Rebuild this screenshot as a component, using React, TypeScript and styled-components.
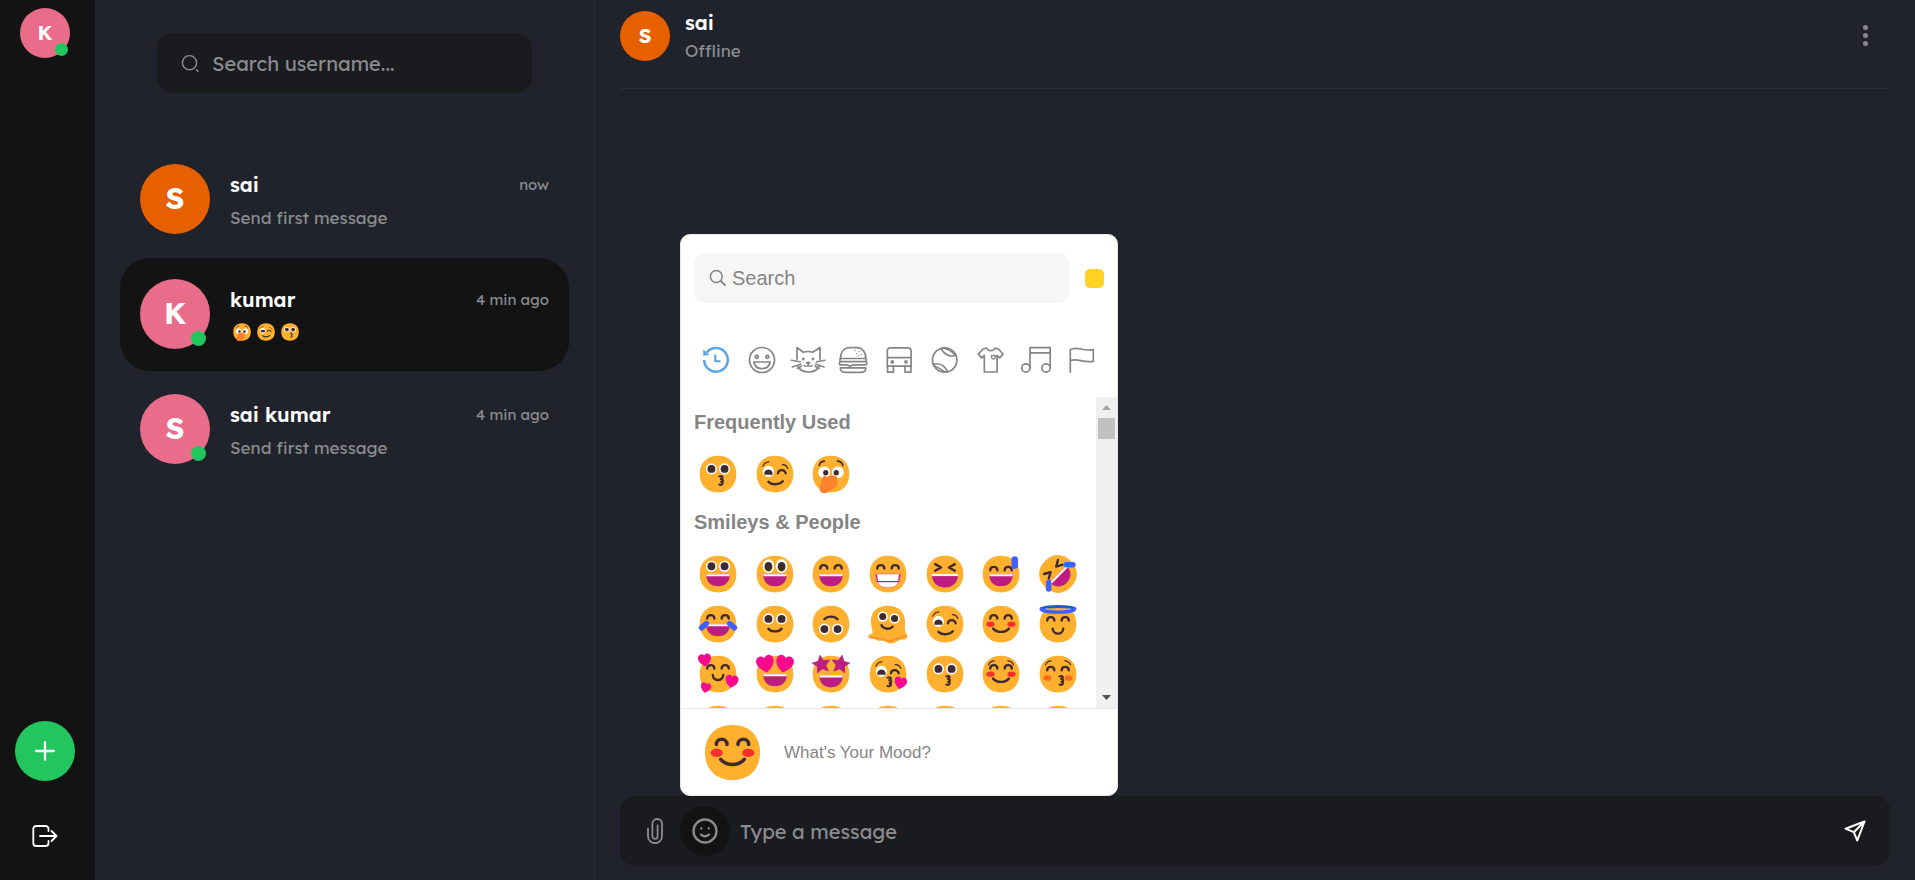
import React, { ReactNode } from 'react';
import styled, { createGlobalStyle } from 'styled-components';

const INK = '#402A32';
const MOUTH = '#BB1D80';
const BLUE = '#3F5FFF';
const PINK = '#F70A8D';

const GlobalStyle = createGlobalStyle`
  *, *::before, *::after { box-sizing: border-box; }
  body {
    margin: 0;
    background: #20232b;
    color: #fff;
    font-family: Lexend, Inter, "Liberation Sans", sans-serif;
  }
  button, input { font: inherit; color: inherit; }
  button { border: 0; padding: 0; background: none; cursor: pointer; }
  h2, h3, p { margin: 0; }
`;

/* ---------- Emoji drawings ---------- */

const FacePath = () => (
  <path
    fill="#FFB02E"
    d="M16 30C25.3 30 30 23.7 30 16S25.3 2 16 2 2 8.3 2 16s4.7 14 14 14Z"
  />
);

const OpenEyes = ({ y = 12.1 }: { y?: number }) => (
  <>
    <circle cx="11" cy={y} r="4.2" fill="#fff" />
    <circle cx="21" cy={y} r="4.2" fill="#fff" />
    <circle cx="11" cy={y} r="3" fill={INK} />
    <circle cx="21" cy={y} r="3" fill={INK} />
  </>
);

const TallEyes = () => (
  <>
    <ellipse cx="11" cy="10" rx="4.4" ry="5.2" fill="#fff" />
    <ellipse cx="21" cy="10" rx="4.4" ry="5.2" fill="#fff" />
    <ellipse cx="11" cy="10.4" rx="3" ry="3.6" fill={INK} />
    <ellipse cx="21" cy="10.4" rx="3" ry="3.6" fill={INK} />
  </>
);

const Line = ({ d, w = 1.8, c = INK }: { d: string; w?: number; c?: string }) => (
  <path d={d} fill="none" stroke={c} strokeWidth={w} strokeLinecap="round" strokeLinejoin="round" />
);

const HappyEyes = () => (
  <Line d="M7.8 11.9c0-3.5 5.4-3.5 5.4 0M18.8 11.9c0-3.5 5.4-3.5 5.4 0" />
);

const SquintEyes = () => <Line d="M8.5 8.5l4.5 2.5-4.5 2.5M23.5 8.5L19 11l4.5 2.5" />;

const WinkEyes = () => (
  <>
    <circle cx="11" cy="14" r="4.3" fill="#fff" />
    <path d="M7.9 16.5a3.2 3.2 0 1 1 6.2 0z" fill={INK} />
    <Line d="M18.2 15.5c.6-3.2 5-3.2 6 0" w={1.7} />
    <Line d="M6.8 10c1-2.3 2.5-3.2 4.5-3.3M21.5 8.8c2-.1 3.5 1 4.3 3" w={0.9} />
  </>
);

const Brows = () => (
  <Line d="M6.5 9c.8-2 2.3-2.9 4.3-3M25.5 9c-.8-2-2.3-2.9-4.3-3" w={0.9} />
);

const Laugh = ({ big = false }: { big?: boolean }) => (
  <>
    <path
      d={big ? 'M6 16h20c0 6-3.5 10.2-10 10.2S6 22 6 16Z' : 'M7 16.2h18c0 5.5-3.3 9.2-9 9.2s-9-3.7-9-9.2Z'}
      fill={MOUTH}
    />
    <path d={big ? 'M6 16h20v1.6H6z' : 'M7 16.2h18l-.3 1.6H7.3z'} fill="#fff" />
  </>
);

const Kiss = ({ x = 18.3, y = 17 }: { x?: number; y?: number }) => (
  <path
    transform={`translate(${x} ${y})`}
    d="M-1.3 .8c1.6-.7 2.7 0 2.5.9s-1.2 1-1.9 1c1.5.1 2.3.5 2.2 1.3s-1.2 1-1.9 1c1.3.2 1.9.6 1.7 1.3-.2 1-1.5 1.2-2.6.8"
    fill="none"
    stroke={INK}
    strokeWidth="1.6"
    strokeLinecap="round"
  />
);

const Heart = ({ x, y, s, r = 0 }: { x: number; y: number; s: number; r?: number }) => (
  <path
    transform={`translate(${x} ${y}) rotate(${r}) scale(${s})`}
    d="M0 5C-2.8 3.2-5 1-5-1.6-5-3.4-3.8-4.6-2.3-4.6-1.2-4.6-.4-4 0-3.2.4-4 1.2-4.6 2.3-4.6 3.8-4.6 5-3.4 5-1.6 5 1 2.8 3.2 0 5Z"
    fill={PINK}
  />
);

const Star = ({ x, y, r }: { x: number; y: number; r: number }) => (
  <path
    transform={`translate(${x} ${y}) rotate(${r})`}
    d="M0-6.8L2-2.5 6.7-2 3.2 1.3 4.2 6 0 3.6-4.2 6-3.2 1.3-6.7-2-2-2.5Z"
    fill={MOUTH}
    stroke={MOUTH}
    strokeWidth=".6"
    strokeLinejoin="round"
  />
);

const Cheeks = ({ color = '#F92F2F', y = 16.2 }: { color?: string; y?: number }) => (
  <>
    <ellipse cx="8" cy={y} rx="3.1" ry="2.1" fill={color} />
    <ellipse cx="24" cy={y} rx="3.1" ry="2.1" fill={color} />
  </>
);

const WideSmile = () => <Line d="M10 19.5c3 3.4 9 3.4 12 0" />;
const SmallSmile = () => <Line d="M12 19.3c.3 5 7.7 5 8 0" />;
const SoftSmile = () => <Line d="M11 19.7c2.5 2.6 7.5 2.6 10 0" />;

const faces: Record<string, ReactNode> = {
  kissing: <><FacePath /><OpenEyes /><Kiss /></>,
  winking: <><FacePath /><WinkEyes /><Line d="M11 22c2.5 2.5 8 2.5 11-.5" /></>,
  gasping: (
    <>
      <FacePath />
      <circle cx="10.8" cy="14.7" r="4.5" fill="#fff" />
      <circle cx="21.2" cy="14.7" r="4.5" fill="#fff" />
      <circle cx="12" cy="15" r="2" fill={INK} />
      <circle cx="20" cy="15" r="2" fill={INK} />
      <Line d="M7 9.5c.5-2 2-3.3 4-3.3M25 9.5c-.5-2-2-3.3-4-3.3" w={1.2} />
      <path
        d="M9 19.5l1.6-2c.6-.6 1.5-.3 1.7.6l6-1c1.5-.2 2.2.8 2.2 1.8l.5 4c0 2.5-1.8 4-4 4.5l-4.500 3H9.500c-1.700-.5-2.300-2-2.300-3.500Z"
        fill="#FF822D"
      />
    </>
  ),
  grinning: <><FacePath /><OpenEyes y={10.1} /><Laugh /></>,
  smiley: <><FacePath /><TallEyes /><Laugh /></>,
  smile: <><FacePath /><HappyEyes /><Laugh /></>,
  beaming: (
    <>
      <FacePath />
      <HappyEyes />
      <path d="M6.5 16h19c0 7-3.2 10.4-9.5 10.4S6.5 23 6.5 16Z" fill="#fff" stroke={MOUTH} strokeWidth=".3" />
      <path d="M7 21.3h18l-.4 1h-17zM6.5 16l1.2.5.7 5.5-1.1-1.2ZM25.5 16l-1.2.5-.7 5.5 1.1-1.2Z" fill={MOUTH} />
    </>
  ),
  laughing: <><FacePath /><SquintEyes /><Laugh big /></>,
  sweat: (
    <>
      <FacePath />
      <g transform="translate(0 1.3)"><HappyEyes /></g>
      <Laugh />
      <rect x="24" y="2.5" width="5" height="9.7" rx="2.5" fill={BLUE} />
    </>
  ),
  rofl: (
    <>
      <g transform="rotate(-45 16 16)">
        <FacePath />
        <SquintEyes />
        <Laugh />
      </g>
      <rect x="20.3" y="6.8" width="9.2" height="4.2" rx="2.1" fill={BLUE} />
      <rect x="6.8" y="20.3" width="4.2" height="9.2" rx="2.1" fill={BLUE} />
    </>
  ),
  joy: (
    <>
      <FacePath />
      <HappyEyes />
      <Laugh />
      <rect x="0.8" y="15.2" width="9" height="4.2" rx="2" transform="rotate(-42 5.3 17.3)" fill={BLUE} />
      <rect x="22.2" y="15.2" width="9" height="4.2" rx="2" transform="rotate(42 26.7 17.3)" fill={BLUE} />
    </>
  ),
  slight: <><FacePath /><OpenEyes /><SoftSmile /></>,
  upside: (
    <g transform="rotate(180 16 16)">
      <FacePath />
      <OpenEyes />
      <SoftSmile />
    </g>
  ),
  melting: (
    <>
      <path
        d="M3 13.5C3 6.5 8 2 16 2s13 5 13 12c0 3-.6 6 .5 8.3.8 1.5 1.3 2 1.3 3.2 0 2.3-3 2.3-5.3 2.5-1.5.1-2.5 1.5-5 2.5-2.3.7-4.5.3-6-.9-2-1.3-3.5-.8-5.5-.8-3-.1-2.5-1.6-5-1.7-1.8 0-3-.6-2.9-2 .2-1.6 2-1.5 3.1-1.9C4.5 21.5 3 17.5 3 13.5Z"
        fill="#FFB02E"
      />
      <Line d="M1.8 26c3 1 3.5.2 5.5.8 2 .7 3.7.1 5.5 1 2.7 1.7 5.4 1.5 8 0 2.2-1.5 6.5-1 9-2.6" w={0.9} c="#FF822D" />
      <circle cx="12" cy="10.3" r="3.9" fill="#fff" />
      <circle cx="21" cy="11.8" r="3.9" fill="#fff" />
      <circle cx="12" cy="10.3" r="2.7" fill={INK} />
      <circle cx="21" cy="11.8" r="2.7" fill={INK} />
      <Line d="M11 17c1.5 3 6.5 3.6 8.5 1" />
    </>
  ),
  blush: <><FacePath /><HappyEyes /><Cheeks /><WideSmile /></>,
  halo: (
    <>
      <FacePath />
      <path d="M3.5 4.5C5 2 27 2 28.5 4.5" fill="none" stroke="#1B5ECB" strokeWidth="2.2" />
      <path d="M3.2 4.3C3.2 7.8 28.8 7.8 28.8 4.3" fill="none" stroke={BLUE} strokeWidth="2.6" strokeLinecap="round" />
      <g transform="translate(0 1.5)"><HappyEyes /></g>
      <g transform="translate(0 .3)"><SmallSmile /></g>
    </>
  ),
  hearts: (
    <>
      <FacePath />
      <HappyEyes />
      <g transform="translate(0 -2.5)"><SmallSmile /></g>
      <Heart x={5.9} y={5.3} s={1} r={-8} />
      <Heart x={26.5} y={21.5} s={1} r={8} />
      <Heart x={6.7} y={26.4} s={0.8} r={12} />
    </>
  ),
  heartEyes: (
    <>
      <FacePath />
      <Laugh />
      <Heart x={8.7} y={8.2} s={1.35} r={-12} />
      <Heart x={23.3} y={8.2} s={1.35} r={12} />
    </>
  ),
  starEyes: <><FacePath /><g transform="translate(0 .8)"><Laugh /></g><Star x={8.7} y={8.5} r={-10} /><Star x={23.3} y={8.5} r={10} /></>,
  kissHeart: <><FacePath /><WinkEyes /><Kiss x={17} y={18} /><Heart x={25.5} y={22.7} s={0.95} r={12} /></>,
  relaxed: <><FacePath /><Brows /><HappyEyes /><Cheeks /><WideSmile /></>,
  kissClosed: <><FacePath /><Brows /><g transform="translate(0 1.3)"><HappyEyes /></g><Cheeks color="#FF6723" y={19} /><Kiss x={18.5} y={17} /></>,
  plain: <FacePath />,
};

const EmojiSvg = styled.svg<{ $size: number }>`
  width: ${(p) => p.$size}px;
  height: ${(p) => p.$size}px;
  flex: none;
  display: block;
`;

const Emoji = ({ name, size }: { name: string; size: number }) => (
  <EmojiSvg $size={size} viewBox="0 0 32 32" aria-hidden="true">
    {faces[name]}
  </EmojiSvg>
);

/* ---------- Shell ---------- */

const Shell = styled.div`
  display: flex;
  min-height: 100vh;
`;

const Rail = styled.nav`
  width: 95px;
  flex: none;
  padding: 8px 5px 19px 0;
  background: #131313;
  display: flex;
  flex-direction: column;
  align-items: center;
  justify-content: space-between;
`;

const RailActions = styled.div`
  display: flex;
  flex-direction: column;
  align-items: center;
  gap: 30px;
`;

const RoundButton = styled.button<{ $size: number; $bg?: string }>`
  width: ${(p) => p.$size}px;
  height: ${(p) => p.$size}px;
  border-radius: 50%;
  background: ${(p) => p.$bg || 'transparent'};
  display: flex;
  align-items: center;
  justify-content: center;
  flex: none;
`;

const AvatarBox = styled.div<{ $large?: boolean; $color: string }>`
  position: relative;
  flex: none;
  width: ${(p) => (p.$large ? 70 : 50)}px;
  height: ${(p) => (p.$large ? 70 : 50)}px;
  padding-bottom: 2px;
  border-radius: 50%;
  background: ${(p) => p.$color};
  display: flex;
  align-items: center;
  justify-content: center;
  font-size: ${(p) => (p.$large ? 30 : 20)}px;
  font-weight: 700;
`;

const OnlineDot = styled.span<{ $large?: boolean }>`
  position: absolute;
  right: ${(p) => (p.$large ? 4 : 2)}px;
  bottom: ${(p) => (p.$large ? 3 : 2)}px;
  width: ${(p) => (p.$large ? 15 : 13)}px;
  height: ${(p) => (p.$large ? 15 : 13)}px;
  border-radius: 50%;
  background: #22c55e;
`;

type AvatarProps = { letter: string; color: string; large?: boolean; online?: boolean };
const Avatar = ({ letter, color, large, online }: AvatarProps) => (
  <AvatarBox $large={large} $color={color}>
    {letter}
    {online && <OnlineDot $large={large} />}
  </AvatarBox>
);

/* ---------- Contacts ---------- */

const Contacts = styled.aside`
  width: 500px;
  flex: none;
  padding: 33px 25px;
  border-right: 1px solid #2a2d35;
  display: flex;
  flex-direction: column;
  gap: 50px;
`;

const UserSearch = styled.label`
  width: 375px;
  height: 60px;
  align-self: center;
  padding: 0 24px;
  border-radius: 15px;
  background: #1a1b1e;
  color: #8b8c90;
  display: flex;
  align-items: center;
  gap: 12px;
`;

const BareInput = styled.input`
  flex: 1;
  min-width: 0;
  border: 0;
  outline: 0;
  padding: 0;
  background: transparent;
  font-size: 20px;
  &::placeholder { color: inherit; opacity: 1; }
`;

const ContactList = styled.ul`
  list-style: none;
  margin: 0;
  padding: 0;
  display: flex;
  flex-direction: column;
  gap: 2px;
`;

const ContactRow = styled.button<{ $active?: boolean }>`
  width: 100%;
  height: 113px;
  padding: 0 20px 1px;
  border-radius: 30px;
  background: ${(p) => (p.$active ? '#131313' : 'transparent')};
  display: flex;
  align-items: center;
  gap: 20px;
  text-align: left;
`;

const ContactText = styled.div`
  flex: 1;
  min-width: 0;
  height: 72px;
  padding-top: 9px;
`;

const ContactTop = styled.div`
  display: flex;
  justify-content: space-between;
  align-items: center;
  line-height: 26px;
`;

const Name = styled.span`
  font-size: 20px;
  font-weight: 600;
`;

const Time = styled.span`
  font-size: 15px;
  color: #8b8c90;
`;

const Preview = styled.div`
  margin-top: 6px;
  height: 28px;
  font-size: 17px;
  line-height: 28px;
  color: #8b8c90;
`;

const EmojiRun = styled.div`
  display: flex;
  gap: 4px;
  padding: 3px 2px;
`;

const contacts = [
  { name: 'sai', letter: 'S', color: '#e66000', time: 'now', online: false, active: false },
  { name: 'kumar', letter: 'K', color: '#e96d8b', time: '4 min ago', online: true, active: true, emojis: ['gasping', 'winking', 'kissing'] },
  { name: 'sai kumar', letter: 'S', color: '#e96d8b', time: '4 min ago', online: true, active: false },
];

/* ---------- Chat ---------- */

const Chat = styled.main`
  flex: 1;
  min-width: 0;
  padding: 0 25px 14px;
  display: flex;
  flex-direction: column;
`;

const ChatHeader = styled.header`
  height: 89px;
  padding: 11px 13px 0 0;
  border-bottom: 1px solid #2a2d35;
  display: flex;
  align-items: flex-start;
  gap: 15px;
`;

const Peer = styled.div`
  flex: 1;
  h2 { font-size: 20px; font-weight: 600; line-height: 24px; }
  p { margin-top: 3px; font-size: 17px; line-height: 26px; color: #8b8c90; }
`;

const MenuButton = styled.button`
  width: 24px;
  height: 48px;
  display: flex;
  align-items: center;
  justify-content: center;
`;

const Messages = styled.section`
  flex: 1;
`;

const Composer = styled.form`
  position: relative;
  height: 70px;
  padding: 0 10px;
  border-radius: 15px;
  background: #1a1b1e;
  color: #8b8c90;
  display: flex;
  align-items: center;
`;

const MessageInput = styled(BareInput)`
  margin-left: 10px;
`;

/* ---------- Picker ---------- */

const Picker = styled.div`
  position: absolute;
  left: 60px;
  bottom: 100%;
  width: 438px;
  border: 1px solid #e7e7e7;
  border-radius: 10px;
  background: #fff;
  color: #858585;
  font-family: "Liberation Sans", Arial, sans-serif;
  overflow: hidden;
`;

const PickerHeader = styled.div`
  display: flex;
  align-items: center;
  justify-content: space-between;
  padding: 18px 13px 0;
`;

const EmojiSearch = styled.label`
  width: 375px;
  height: 50px;
  padding: 0 15px;
  border-radius: 10px;
  background: #f6f6f6;
  display: flex;
  align-items: center;
  gap: 5px;
`;

const SkinTone = styled.button`
  width: 19px;
  height: 19px;
  border-radius: 5px;
  background: #ffd225;
`;

const Categories = styled.div`
  display: flex;
  justify-content: space-between;
  padding: 43px 17px 23px;
`;

const CategoryButton = styled.button<{ $active?: boolean }>`
  width: 36px;
  height: 28px;
  color: ${(p) => (p.$active ? '#5aa5e2' : '#858585')};
  svg { display: block; }
`;

const PickerBody = styled.div`
  height: 311px;
  display: flex;
  overflow: hidden;
`;

const EmojiScroll = styled.div`
  flex: 1;
  padding: 2px 10px 0 9px;
`;

const GroupLabel = styled.h3`
  height: 50px;
  padding: 0 4px 4px;
  font-size: 20px;
  line-height: 46px;
  font-weight: 700;
`;

const EmojiGrid = styled.div`
  display: grid;
  grid-template-columns: repeat(7, 1fr);
  grid-auto-rows: 50px;
`;

const EmojiButton = styled.button`
  display: flex;
  align-items: center;
  justify-content: center;
`;

const ScrollTrack = styled.div`
  width: 21px;
  background: #f0f0f0;
  display: flex;
  flex-direction: column;
  align-items: center;
`;

const ScrollArrow = styled.div`
  height: 21px;
  display: flex;
  align-items: center;
`;

const ScrollThumb = styled.div`
  width: 17px;
  height: 21px;
  margin-bottom: auto;
  background: #c1c1c1;
`;

const PickerFooter = styled.div`
  height: 87px;
  padding: 1px 20px 0;
  border-top: 1px solid #e7e7e7;
  display: flex;
  align-items: center;
  gap: 20px;
  font-size: 17px;
`;

const cat = (children: ReactNode) => (
  <svg width="36" height="28" viewBox="0 0 36 28" fill="none" stroke="currentColor" strokeWidth="1.7" strokeLinejoin="round" strokeLinecap="round" aria-hidden="true">
    {children}
  </svg>
);

const categories: { label: string; icon: ReactNode }[] = [
  {
    label: 'Frequently Used',
    icon: cat(
      <>
        <path d="M8.8 6.5A11.8 11.8 0 1 1 6.2 14" strokeWidth="2.5" strokeLinecap="butt" />
        <path d="M5.2 3.5v6.3l6.2-.7z" fill="currentColor" stroke="none" />
        <path d="M17.3 8.5v6.8h5.2" strokeWidth="2.1" strokeLinecap="butt" />
      </>,
    ),
  },
  {
    label: 'Smileys & People',
    icon: cat(
      <>
        <circle cx="18" cy="14" r="12.5" />
        <circle cx="12.7" cy="10.8" r="1.5" />
        <circle cx="23.3" cy="10.8" r="1.5" />
        <path d="M9.8 16h16.4c-.8 4.2-3.8 6.6-8.2 6.6S10.6 20.2 9.8 16Z" />
      </>,
    ),
  },
  {
    label: 'Animals & Nature',
    icon: cat(
      <>
        <path d="M7 13.5V1.5l6.3 4.8c3-1 6.400-1 9.400 0L30 1.5v12M8 20.5c2 3.7 5.6 5.5 10.5 5.5S27 24.2 29 20.5" />
        <path d="M1.3 14.3l8.7 1.5M2.3 21l8.5-3M35 14.3l-8.5 1.5M34 21l-8.3-3M7.5 22.500l4-2.500M29 22.500l-4-2.500" strokeWidth="1.500" />
        <path d="M16.5 16.5h3.4l-1.7 1.9zM18.2 18.4c0 2.5-3.5 2.5-4 .8M18.2 18.4c0 2.5 3.5 2.5 4 .8" strokeWidth="1.3" />
        <circle cx="13.3" cy="13" r=".6" />
        <circle cx="23" cy="13" r=".6" />
      </>,
    ),
  },
  {
    label: 'Food & Drink',
    icon: cat(
      <>
        <path d="M5.5 12.5C5.5 5.5 9.5 1.7 15 1.7h6.5c5.5 0 9.3 3.8 9.3 10.8z" />
        <path d="M5 15.6h26M6 12.5c-1.6.9-1.6 2.3 0 3.1M30.3 12.5c1.6.9 1.6 2.3 0 3.1M5 18.9h7l3 1.3 3-1.3h13M5.5 15.6c-1.5 1-1.5 2.3 0 3.3M30.8 15.6c1.5 1 1.5 2.3 0 3.3" />
        <path d="M5.3 21.9h25.5c0 2.8-1.7 4.4-4.6 4.4H9.9c-2.9 0-4.6-1.6-4.6-4.4Z" />
        <path d="M20 4.500h.1M24 5.500h.1M21.500 7.700h.1M26.500 8.300h.1M24 9.700h.1" strokeWidth="1.300" />
      </>,
    ),
  },
  {
    label: 'Travel & Places',
    icon: cat(
      <>
        <path d="M6.3 20.2V5c0-2 1.5-3.2 3.2-3.2h17.3c1.8 0 3.3 1.2 3.3 3.2v15.2zM6.3 11.7h23.8" />
        <path d="M6.5 20.2v5.9h5.9v-5.9M24 20.2v5.9h5.9v-5.9" />
        <circle cx="11.3" cy="15.9" r="1" fill="currentColor" />
        <circle cx="25" cy="15.9" r="1" fill="currentColor" />
      </>,
    ),
  },
  {
    label: 'Activities',
    icon: cat(
      <>
        <circle cx="17.7" cy="14" r="12.2" />
        <path d="M14.5 2.5c1.3 4.5 7.5 9.3 13.8 6.7M15.500 2c4.500.8 9.500 3.300 12.300 6.700M6 18.300c6.500-2 12.500 1.800 14.500 7.500M6.800 19.700c4 .8 7.700 4.700 11.500 6.300" strokeWidth="1.500" />
      </>,
    ),
  },
  {
    label: 'Objects',
    icon: cat(
      <>
        <path d="M13.5 2c1.5 3.6 7 3.6 8.5 0l3.7 1.2 4.4 5-3.4 3.6-2.6-2.5v16.700H11.300V9.300l-2.600 2.500-3.400-3.600 4.400-5z" />
        <path d="M18.5 9.5h3.8v2.3l-1.900 1.400-1.900-1.400z" strokeWidth="1.300" />
      </>,
    ),
  },
  {
    label: 'Symbols',
    icon: cat(
      <>
        <circle cx="7.8" cy="22" r="4.1" />
        <circle cx="28" cy="22" r="4.1" />
        <path d="M12 22V1.6h20.2V22M12 6.8h20.2" />
      </>,
    ),
  },
  {
    label: 'Flags',
    icon: cat(<path d="M6.3 26V3.8c7-4.6 12 2.2 23-.3v11.8C18.5 17.5 13.5 11.3 6.3 14.7" />),
  },
];

const frequent = ['kissing', 'winking', 'gasping'];
const people = [
  'grinning', 'smiley', 'smile', 'beaming', 'laughing', 'sweat', 'rofl',
  'joy', 'slight', 'upside', 'melting', 'winking', 'blush', 'halo',
  'hearts', 'heartEyes', 'starEyes', 'kissHeart', 'kissing', 'relaxed', 'kissClosed',
  'plain', 'plain', 'plain', 'plain', 'plain', 'plain', 'plain',
];

const Grid = ({ names }: { names: string[] }) => (
  <EmojiGrid>
    {names.map((n, i) => (
      <EmojiButton key={i} type="button" aria-label={n}>
        <Emoji name={n} size={42} />
      </EmojiButton>
    ))}
  </EmojiGrid>
);

const EmojiPicker = () => (
  <Picker>
    <PickerHeader>
      <EmojiSearch>
        <svg width="18" height="18" viewBox="0 0 18 18" fill="none" stroke="currentColor" strokeWidth="1.5" aria-hidden="true">
          <circle cx="7.3" cy="7.5" r="5.9" />
          <path d="M11.5 11.7l5 5" strokeWidth="1.9" />
        </svg>
        <BareInput type="text" placeholder="Search" aria-label="Search for an emoji" />
      </EmojiSearch>
      <SkinTone type="button" aria-label="Skin tone" />
    </PickerHeader>
    <Categories>
      {categories.map((c, i) => (
        <CategoryButton key={c.label} type="button" aria-label={c.label} $active={i === 0}>
          {c.icon}
        </CategoryButton>
      ))}
    </Categories>
    <PickerBody>
      <EmojiScroll>
        <GroupLabel>Frequently Used</GroupLabel>
        <Grid names={frequent} />
        <GroupLabel>Smileys &amp; People</GroupLabel>
        <Grid names={people} />
      </EmojiScroll>
      <ScrollTrack>
        <ScrollArrow>
          <svg width="9" height="5" viewBox="0 0 9 5" aria-hidden="true"><path d="M0 5L4.5 0 9 5z" fill="#a3a3a3" /></svg>
        </ScrollArrow>
        <ScrollThumb />
        <ScrollArrow>
          <svg width="9" height="5" viewBox="0 0 9 5" aria-hidden="true"><path d="M0 0l4.5 5L9 0z" fill="#505050" /></svg>
        </ScrollArrow>
      </ScrollTrack>
    </PickerBody>
    <PickerFooter>
      <Emoji name="blush" size={63} />
      <span>What's Your Mood?</span>
    </PickerFooter>
  </Picker>
);

export default function App() {
  return (
    <>
      <GlobalStyle />
      <Shell>
        <Rail>
          <Avatar letter="K" color="#e96d8b" online />
          <RailActions>
            <RoundButton type="button" $size={60} $bg="#22c55e" aria-label="New chat">
              <svg width="20" height="20" viewBox="0 0 20 20" stroke="#fff" strokeWidth="2.3" strokeLinecap="round" aria-hidden="true">
                <path d="M10 1.2v17.6M1.2 10h17.6" />
              </svg>
            </RoundButton>
            <RoundButton type="button" $size={50} aria-label="Log out">
              <svg width="26" height="22" viewBox="0 0 26 22" fill="none" stroke="#fff" strokeWidth="1.8" strokeLinecap="round" strokeLinejoin="round" aria-hidden="true">
                <path d="M16.5 6V4c0-1.9-1.1-3-3-3H4.3c-1.9 0-3 1.1-3 3v14c0 1.9 1.1 3 3 3h9.2c1.9 0 3-1.1 3-3v-2M8 11h16.5M19.5 6l5 5-5 5" />
              </svg>
            </RoundButton>
          </RailActions>
        </Rail>

        <Contacts>
          <UserSearch>
            <svg width="19" height="19" viewBox="0 0 19 19" fill="none" stroke="currentColor" strokeWidth="1.4" strokeLinecap="round" aria-hidden="true">
              <circle cx="8.5" cy="8.7" r="7.1" />
              <path d="M15.7 15.8l1.2 1.4" />
            </svg>
            <BareInput type="text" placeholder="Search username..." aria-label="Search username" />
          </UserSearch>
          <ContactList>
            {contacts.map((c) => (
              <li key={c.name}>
                <ContactRow type="button" $active={c.active}>
                  <Avatar letter={c.letter} color={c.color} online={c.online} large />
                  <ContactText>
                    <ContactTop>
                      <Name>{c.name}</Name>
                      <Time>{c.time}</Time>
                    </ContactTop>
                    <Preview>
                      {c.emojis ? (
                        <EmojiRun>
                          {c.emojis.map((e) => (
                            <Emoji key={e} name={e} size={20} />
                          ))}
                        </EmojiRun>
                      ) : (
                        'Send first message'
                      )}
                    </Preview>
                  </ContactText>
                </ContactRow>
              </li>
            ))}
          </ContactList>
        </Contacts>

        <Chat>
          <ChatHeader>
            <Avatar letter="S" color="#e66000" />
            <Peer>
              <h2>sai</h2>
              <p>Offline</p>
            </Peer>
            <MenuButton type="button" aria-label="Menu">
              <svg width="5" height="21" viewBox="0 0 5 21" fill="#8b8c90" aria-hidden="true">
                <circle cx="2.5" cy="2.5" r="2.5" />
                <circle cx="2.5" cy="10.5" r="2.5" />
                <circle cx="2.5" cy="18.5" r="2.5" />
              </svg>
            </MenuButton>
          </ChatHeader>
          <Messages />
          <Composer>
            <RoundButton type="button" $size={50} aria-label="Attach a file">
              <svg width="16" height="26" viewBox="0 0 16 26" fill="none" stroke="currentColor" strokeWidth="1.8" strokeLinecap="round" aria-hidden="true">
                <path d="M1 10.5v7.7a7 7 0 0 0 14 0V5.8a4.8 4.8 0 0 0-9.6 0v12.4a2.6 2.6 0 0 0 5.2 0V7.5" />
              </svg>
            </RoundButton>
            <RoundButton type="button" $size={50} $bg="#131313" aria-label="Emoji">
              <svg width="26" height="26" viewBox="0 0 26 26" fill="none" stroke="currentColor" strokeWidth="2.3" strokeLinecap="round" aria-hidden="true">
                <circle cx="13" cy="13" r="11.5" />
                <path d="M9 16.5c2 2.3 6 2.3 8 0M9.3 10.3v.1M16.7 10.3v.1" />
              </svg>
            </RoundButton>
            <MessageInput type="text" placeholder="Type a message" aria-label="Message" />
            <RoundButton type="submit" $size={50} aria-label="Send">
              <svg width="22" height="22" viewBox="0 0 22 22" fill="none" stroke="#fff" strokeWidth="2" strokeLinejoin="round" strokeLinecap="round" aria-hidden="true">
                <path d="M20.5 1.5L1.5 8.7l8.3 3.5 3.5 8.3zM9.8 12.2L20.5 1.5" />
              </svg>
            </RoundButton>
            <EmojiPicker />
          </Composer>
        </Chat>
      </Shell>
    </>
  );
}
